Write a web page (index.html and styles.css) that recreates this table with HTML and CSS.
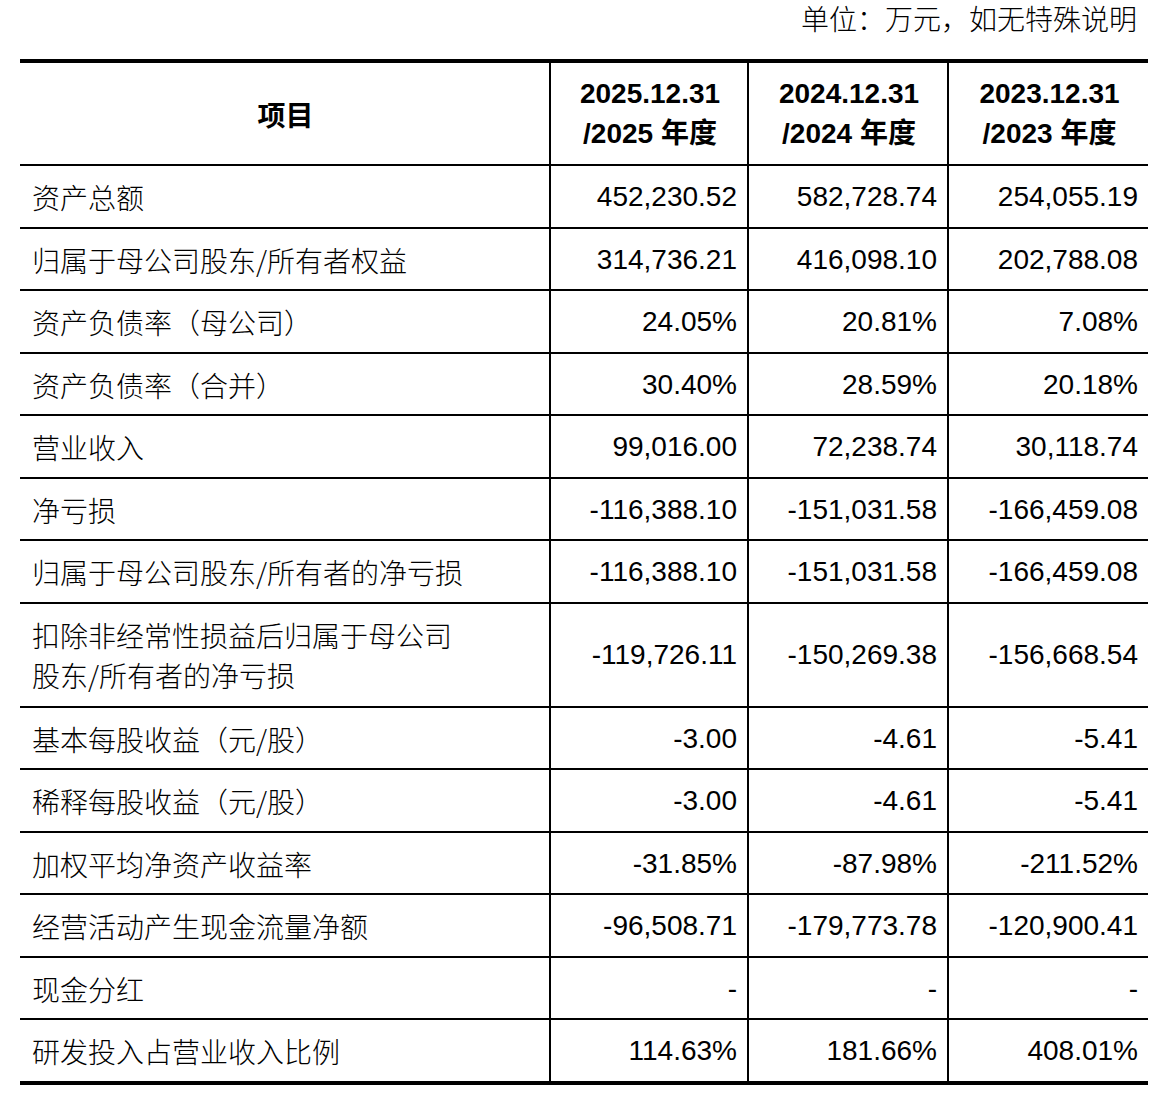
FILE: index.html
```html
<!DOCTYPE html>
<html lang="zh-CN">
<head>
<meta charset="utf-8">
<title>主要财务数据</title>
<link rel="stylesheet" href="styles.css">
</head>
<body>
<div class="note">单位：万元，如无特殊说明</div>
<table class="fin">
  <colgroup>
    <col class="c-item">
    <col class="c-val">
    <col class="c-val2">
    <col class="c-val2">
  </colgroup>
  <thead>
    <tr>
      <th class="h-item">项目</th>
      <th>2025.12.31<br>/2025 年度</th>
      <th>2024.12.31<br>/2024 年度</th>
      <th>2023.12.31<br>/2023 年度</th>
    </tr>
  </thead>
  <tbody>
    <tr><td class="lbl">资产总额</td><td>452,230.52</td><td>582,728.74</td><td>254,055.19</td></tr>
    <tr><td class="lbl">归属于母公司股东/所有者权益</td><td>314,736.21</td><td>416,098.10</td><td>202,788.08</td></tr>
    <tr><td class="lbl">资产负债率（母公司）</td><td>24.05%</td><td>20.81%</td><td>7.08%</td></tr>
    <tr><td class="lbl">资产负债率（合并）</td><td>30.40%</td><td>28.59%</td><td>20.18%</td></tr>
    <tr><td class="lbl">营业收入</td><td>99,016.00</td><td>72,238.74</td><td>30,118.74</td></tr>
    <tr><td class="lbl">净亏损</td><td>-116,388.10</td><td>-151,031.58</td><td>-166,459.08</td></tr>
    <tr><td class="lbl">归属于母公司股东/所有者的净亏损</td><td>-116,388.10</td><td>-151,031.58</td><td>-166,459.08</td></tr>
    <tr class="tall"><td class="lbl">扣除非经常性损益后归属于母公司<br>股东/所有者的净亏损</td><td>-119,726.11</td><td>-150,269.38</td><td>-156,668.54</td></tr>
    <tr><td class="lbl">基本每股收益（元/股）</td><td>-3.00</td><td>-4.61</td><td>-5.41</td></tr>
    <tr><td class="lbl">稀释每股收益（元/股）</td><td>-3.00</td><td>-4.61</td><td>-5.41</td></tr>
    <tr><td class="lbl">加权平均净资产收益率</td><td>-31.85%</td><td>-87.98%</td><td>-211.52%</td></tr>
    <tr><td class="lbl">经营活动产生现金流量净额</td><td>-96,508.71</td><td>-179,773.78</td><td>-120,900.41</td></tr>
    <tr><td class="lbl">现金分红</td><td>-</td><td>-</td><td>-</td></tr>
    <tr><td class="lbl">研发投入占营业收入比例</td><td>114.63%</td><td>181.66%</td><td>408.01%</td></tr>
  </tbody>
</table>
</body>
</html>
```

FILE: styles.css
```css
html, body {
  margin: 0;
  padding: 0;
  background: #ffffff;
}

body {
  padding: 0 21px 0 20px;
  color: #000000;
  font-family: "Liberation Sans", Arial, "Noto Sans CJK SC", sans-serif;
  font-size: 28px;
}

.note {
  text-align: right;
  padding-right: 10px;
  height: 36px;
  line-height: 36px;
  margin-bottom: 23px;
  font-family: "Noto Sans CJK SC", sans-serif;
  font-weight: 300;
}

.fin {
  width: 100%;
  border-collapse: collapse;
  table-layout: fixed;
}

.c-item { width: 530px; }
.c-val { width: 198px; }
.c-val2 { width: 200px; }

.fin th,
.fin td {
  border: 2px solid #000000;
  line-height: 40px;
  padding: 11px 10px 9.5px 12px;
  vertical-align: middle;
}

.fin tr > :first-child { border-left: none; }
.fin tr > :last-child { border-right: none; }

.fin thead th {
  border-top: 4px solid #000000;
  padding-top: 11px;
  padding-bottom: 10px;
  text-align: center;
  font-weight: bold;
  font-family: "Liberation Sans", Arial, "Noto Sans CJK SC", sans-serif;
}

.fin thead .h-item {
  font-family: "Noto Sans CJK SC", sans-serif;
  font-weight: 700;
}

.fin tbody td {
  text-align: right;
}

.fin tbody td.lbl {
  text-align: left;
  font-family: "Noto Sans CJK SC", sans-serif;
  font-weight: 300;
  white-space: nowrap;
}

.fin tbody tr.tall td {
  padding-top: 11.5px;
  padding-bottom: 10.5px;
}

.fin tbody tr:last-child td {
  border-bottom: 4px solid #000000;
}
```
